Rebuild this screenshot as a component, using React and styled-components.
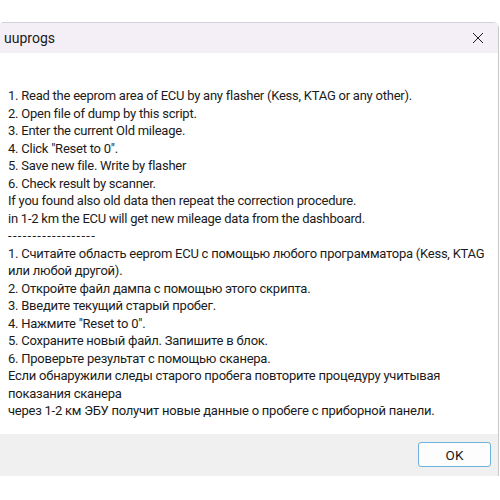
import React from 'react';
import styled, { createGlobalStyle } from 'styled-components';

const GlobalStyle = createGlobalStyle`
  html, body {
    margin: 0;
    padding: 0;
    background: #ffffff;
  }
  body {
    font-family: Roboto, 'Noto Sans', sans-serif;
  }
`;

const englishLines = [
  '1. Read the eeprom area of ECU by any flasher (Kess, KTAG or any other).',
  '2. Open file of dump by this script.',
  '3. Enter the current Old mileage.',
  '4. Click "Reset to 0".',
  '5. Save new file. Write by flasher',
  '6. Check result by scanner.',
  'If you found also old data then repeat the correction procedure.',
  'in 1-2 km the ECU will get new mileage data from the dashboard.',
];

const russianLines = [
  '1. Считайте область eeprom ECU с помощью любого программатора (Kess, KTAG',
  'или любой другой).',
  '2. Откройте файл дампа с помощью этого скрипта.',
  '3. Введите текущий старый пробег.',
  '4. Нажмите "Reset to 0".',
  '5. Сохраните новый файл. Запишите в блок.',
  '6. Проверьте результат с помощью сканера.',
  'Если обнаружили следы старого пробега повторите процедуру учитывая',
  'показания сканера',
  'через 1-2 км ЭБУ получит новые данные о пробеге с приборной панели.',
];

function App() {
  return (
    <>
      <GlobalStyle />
      <Page>
        <Dialog>
          <TitleBar>
            <Title>uuprogs</Title>
            <CloseButton aria-label='close'>
              <svg width='12' height='12' viewBox='0 0 12 12'>
                <path
                  d='M1 1 L11 11 M11 1 L1 11'
                  stroke='#1f1f1f'
                  strokeWidth='1'
                  fill='none'
                />
              </svg>
            </CloseButton>
          </TitleBar>
          <Message>
            {englishLines.map((line, i) => (
              <Line key={`en${i}`}>{line}</Line>
            ))}
            <Line $divider>------------------</Line>
            {russianLines.map((line, i) => (
              <Line key={`ru${i}`}>{line}</Line>
            ))}
          </Message>
          <Footer>
            <OkButton>OK</OkButton>
          </Footer>
        </Dialog>
      </Page>
    </>
  );
}

export default App;

const Page = styled.div`
  width: 500px;
  height: 500px;
  padding-top: 22px;
  box-sizing: border-box;
  overflow: hidden;
`;

const Dialog = styled.div`
  width: 498px;
  border-top: 1px solid #d4d2d6;
  border-right: 1px solid #c8c8c8;
  border-top-left-radius: 4px;
  border-top-right-radius: 6px;
  background: #ffffff;
  display: flex;
  flex-direction: column;
`;

const TitleBar = styled.div`
  height: 30px;
  background: #f4eff6;
  display: flex;
  align-items: center;
  justify-content: space-between;
  padding: 0 10px 0 4px;
`;

const Title = styled.span`
  font-family: Roboto, 'Noto Sans', sans-serif;
  font-size: 14px;
  color: #1a1a1a;
`;

const CloseButton = styled.div`
  width: 20px;
  height: 20px;
  display: flex;
  align-items: center;
  justify-content: center;
`;

const Message = styled.div`
  padding: 34px 8px 14px 8px;
  display: flex;
  flex-direction: column;
`;

const Line = styled.div`
  font-family: Roboto, 'Noto Sans', sans-serif;
  font-size: 13px;
  line-height: 17.5px;
  height: 17.5px;
  color: #1b1b1b;
  white-space: pre;
  letter-spacing: ${(p) => (p.$divider ? '1.3px' : '-0.24px')};
`;

const Footer = styled.div`
  height: 42px;
  background: #f0f0f0;
  display: flex;
  align-items: center;
  justify-content: flex-end;
  padding-right: 7px;
`;

const OkButton = styled.button`
  width: 73px;
  height: 25px;
  background: #fdfdfd;
  border: 1px solid #6fb1dd;
  border-radius: 3px;
  font-family: Roboto, 'Noto Sans', sans-serif;
  font-size: 13.5px;
  color: #1a1a1a;
  padding: 0;
`;
